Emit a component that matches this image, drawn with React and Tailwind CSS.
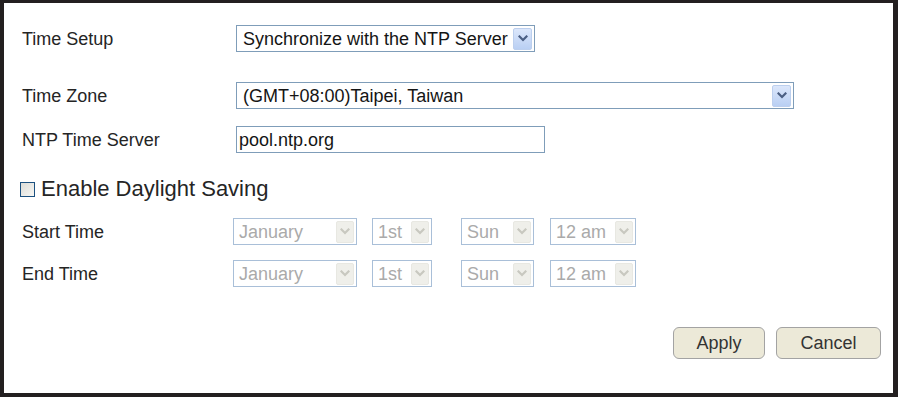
import React from "react";

function Chevron({ color }) {
  return (
    <svg width="10" height="7" viewBox="0 0 10 7">
      <path d="M1.5 1.5 L5 5 L8.5 1.5" fill="none" stroke={color} strokeWidth="2.2" strokeLinecap="square" />
    </svg>
  );
}

function Arrow({ disabled }) {
  return disabled ? (
    <div className="ml-auto mr-[2px] flex h-[22px] w-[18px] items-center justify-center rounded-[2px] border border-[#e8e8e2] bg-[#efefea]">
      <Chevron color="#c8c8c0" />
    </div>
  ) : (
    <div className="ml-auto mr-[2px] flex h-[22px] w-[19px] items-center justify-center rounded-[2px] border border-[#bccfee] bg-gradient-to-b from-[#dce7fb] to-[#b9cff3]">
      <Chevron color="#4b5f83" />
    </div>
  );
}

function Sel({ className, text, disabled }) {
  return (
    <div
      className={
        "flex h-full items-center border bg-white " +
        (disabled ? "border-[#a9bfd8] text-[#aaaaaa]" : "border-[#7f9db9] text-[#151515]") +
        " " +
        className
      }
    >
      <span className={disabled ? "pl-[5px] whitespace-nowrap" : "pl-[6px] whitespace-nowrap"}>{text}</span>
      <Arrow disabled={disabled} />
    </div>
  );
}

function Label({ children }) {
  return <div className="w-[211px] shrink-0 text-[#252525]">{children}</div>;
}

export default function App() {
  return (
    <div
      className="box-border flex h-[397px] w-[898px] flex-col border-t-[3px] border-r-[5px] border-b-[4px] border-l-[4px] border-[#231f20] bg-white pl-[18px] text-[18px] leading-none"
      style={{ fontFamily: '"Liberation Sans", Arial, sans-serif' }}
    >
      <div className="mt-[22px] flex h-[27px] items-center">
        <Label>Time Setup</Label>
        <Sel className="ml-[3px] w-[299px]" text="Synchronize with the NTP Server" />
      </div>

      <div className="mt-[30px] flex h-[27px] items-center">
        <Label>Time Zone</Label>
        <Sel className="ml-[3px] w-[558px]" text="(GMT+08:00)Taipei, Taiwan" />
      </div>

      <div className="mt-[17px] flex h-[27px] items-center">
        <Label>NTP Time Server</Label>
        <div className="ml-[3px] flex h-full w-[309px] items-center border border-[#7f9db9] pl-[2px] text-[#151515]">
          pool.ntp.org
        </div>
      </div>

      <div className="mt-[24px] flex h-[24px] items-center">
        <div className="-ml-[2px] h-[15px] w-[15px] border border-[#1c5180] bg-gradient-to-br from-[#dcdcd7] to-[#f7f7f4]" />
        <span className="ml-[6px] text-[22px] text-[#252525]">Enable Daylight Saving</span>
      </div>

      <div className="mt-[17px] flex h-[27px] items-center">
        <Label>Start Time</Label>
        <div className="flex h-full">
          <Sel disabled className="w-[124px]" text="January" />
          <Sel disabled className="ml-[15px] w-[60px]" text="1st" />
          <Sel disabled className="ml-[29px] w-[73px]" text="Sun" />
          <Sel disabled className="ml-[16px] w-[86px]" text="12 am" />
        </div>
      </div>

      <div className="mt-[15px] flex h-[27px] items-center">
        <Label>End Time</Label>
        <div className="flex h-full">
          <Sel disabled className="w-[124px]" text="January" />
          <Sel disabled className="ml-[15px] w-[60px]" text="1st" />
          <Sel disabled className="ml-[29px] w-[73px]" text="Sun" />
          <Sel disabled className="ml-[16px] w-[86px]" text="12 am" />
        </div>
      </div>

      <div className="mt-[40px] flex h-[32px] justify-end gap-[11px] pr-[12px]">
        <button className="h-full w-[92px] rounded-[6px] border border-[#a3a3a3] bg-[#ece9d8] text-[18px] text-[#333]">
          Apply
        </button>
        <button className="h-full w-[105px] rounded-[6px] border border-[#a3a3a3] bg-[#ece9d8] text-[18px] text-[#333]">
          Cancel
        </button>
      </div>
    </div>
  );
}
